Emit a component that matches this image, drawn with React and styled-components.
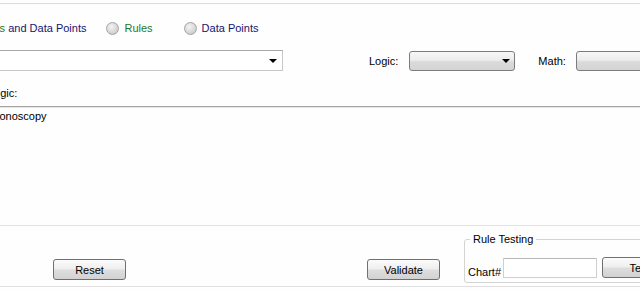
import React from "react";
import styled, { createGlobalStyle } from "styled-components";

const Global = createGlobalStyle`
  html, body { margin: 0; padding: 0; background: #ffffff; overflow: hidden; }
  body { font-family: "Liberation Sans", Arial, sans-serif; font-size: 11px; color: #000; }
`;

const Page = styled.div`
  width: 640px;
  height: 291px;
  overflow: hidden;
  background: #fefefe;
  display: flex;
  flex-direction: column;
`;

const Rule = styled.div`
  flex: none;
  height: 0;
  border-top: 1px solid ${(p) => p.$color || "#dedede"};
  margin-top: ${(p) => p.$top || 0}px;
  margin-right: -20px;
`;

const RadioRow = styled.div`
  display: flex;
  align-items: center;
  height: 14px;
  margin-top: 17px;
  white-space: nowrap;
  flex: none;
`;

const RadioItem = styled.label`
  display: flex;
  align-items: center;
  gap: 5px;
  margin-left: ${(p) => p.$ml}px;
  flex: none;
`;

const RadioDot = styled.span`
  width: 11px;
  height: 11px;
  border-radius: 50%;
  border: 1px solid #a4a4a4;
  background: radial-gradient(circle at 40% 35%, #f4f4f4 0%, #d8d8d8 55%, #bdbdbd 100%);
  flex: none;
`;

const Green = styled.span`
  color: #237a23;
`;
const Navy = styled.span`
  color: #14146e;
`;

const ComboRow = styled.div`
  display: flex;
  align-items: center;
  margin-top: 15px;
  height: 21px;
  white-space: nowrap;
  flex: none;
`;

const WhiteCombo = styled.div`
  width: 323px;
  margin-left: -40px;
  height: 21px;
  border: 1px solid #c6c6c6;
  border-top-color: #a8a8a8;
  background: #fff;
  display: flex;
  align-items: center;
  justify-content: flex-end;
  padding-right: 4px;
  box-sizing: border-box;
  flex: none;
`;

const Arrow = styled.span`
  width: 0;
  height: 0;
  border-left: 4px solid transparent;
  border-right: 4px solid transparent;
  border-top: 4px solid #000;
  margin-right: ${(p) => p.$mr || 0}px;
`;

const FieldLabel = styled.span`
  margin-left: ${(p) => p.$ml}px;
  margin-right: ${(p) => p.$mr}px;
  flex: none;
`;

const GrayCombo = styled.div`
  width: ${(p) => p.$w}px;
  height: 20px;
  box-sizing: border-box;
  border: 1px solid #7c7c7c;
  border-radius: 3px;
  background: linear-gradient(#f7f7f7 0%, #ececec 45%, #dadada 55%, #d4d4d4 100%);
  display: flex;
  align-items: center;
  justify-content: flex-end;
  padding-right: 4px;
  flex: none;
`;

const LogicCaption = styled.div`
  margin-top: 16px;
  margin-left: -12px;
  height: 13px;
  line-height: 13px;
  flex: none;
`;

const DarkRule = styled.div`
  margin-top: 6px;
  height: 0;
  border-top: 1px solid #a6a6a6;
  border-bottom: 1px solid #e6e6e6;
  flex: none;
`;

const TextArea = styled.div`
  flex: none;
  height: 117px;
  padding-top: 2px;
  margin-left: -17px;
  line-height: 13px;
  box-sizing: border-box;
`;

const Bottom = styled.div`
  display: flex;
  align-items: flex-end;
  height: 60px;
  padding-bottom: 6px;
  box-sizing: border-box;
  white-space: nowrap;
  flex: none;
`;

const Button = styled.div`
  width: ${(p) => p.$w}px;
  height: 21px;
  box-sizing: border-box;
  margin-left: ${(p) => p.$ml}px;
  margin-bottom: ${(p) => p.$mb || 0}px;
  border: 1px solid #707070;
  border-radius: 3px;
  background: linear-gradient(#fbfbfb 0%, #efefef 45%, #dddddd 55%, #d2d2d2 100%);
  display: flex;
  align-items: center;
  justify-content: center;
  flex: none;
  font-size: 11px;
`;

const Group = styled.fieldset`
  margin: 0 0 -3px 24px;
  padding: 0 0 3px 3px;
  width: 200px;
  height: 50px;
  box-sizing: border-box;
  border: 1px solid #d4d4d4;
  border-radius: 3px;
  display: flex;
  align-items: flex-end;
  flex: none;
`;

const Legend = styled.legend`
  padding: 0 3px;
  margin-left: 2px;
  font-size: 11px;
  line-height: 12px;
`;

const ChartLabel = styled.span`
  font-size: 11px;
  margin-right: 2px;
  margin-bottom: 1px;
`;

const Input = styled.div`
  width: 94px;
  height: 20px;
  box-sizing: border-box;
  border: 1px solid #cfcfcf;
  border-top-color: #b8b8b8;
  background: #fff;
  flex: none;
  margin-bottom: 1px;
`;

export default function App() {
  return (
    <>
      <Global />
      <Page>
        <Rule $top={3} $color="#dcdcdc" />
        <RadioRow>
          <RadioItem $ml={-41}>
            <RadioDot />
            <span>
              <Green>Rules</Green> <Navy>and Data Points</Navy>
            </span>
          </RadioItem>
          <RadioItem $ml={20}>
            <RadioDot />
            <Green>Rules</Green>
          </RadioItem>
          <RadioItem $ml={31}>
            <RadioDot />
            <Navy>Data Points</Navy>
          </RadioItem>
        </RadioRow>
        <ComboRow>
          <WhiteCombo>
            <Arrow $mr={1} />
          </WhiteCombo>
          <FieldLabel $ml={86} $mr={11}>Logic:</FieldLabel>
          <GrayCombo $w={106}>
            <Arrow $mr={0} />
          </GrayCombo>
          <FieldLabel $ml={23} $mr={10}>Math:</FieldLabel>
          <GrayCombo $w={100} />
        </ComboRow>
        <LogicCaption>Logic:</LogicCaption>
        <DarkRule />
        <TextArea>Colonoscopy</TextArea>
        <Rule $color="#e2e2e2" />
        <Bottom>
          <Button $ml={53} $w={73}>Reset</Button>
          <Button $ml={241} $w={73}>Validate</Button>
          <Group>
            <Legend>Rule Testing</Legend>
            <ChartLabel>Chart#</ChartLabel>
            <Input />
            <Button $ml={5} $w={75} $mb={1}>Test</Button>
          </Group>
        </Bottom>
        <Rule $color="#dedede" />
      </Page>
    </>
  );
}
